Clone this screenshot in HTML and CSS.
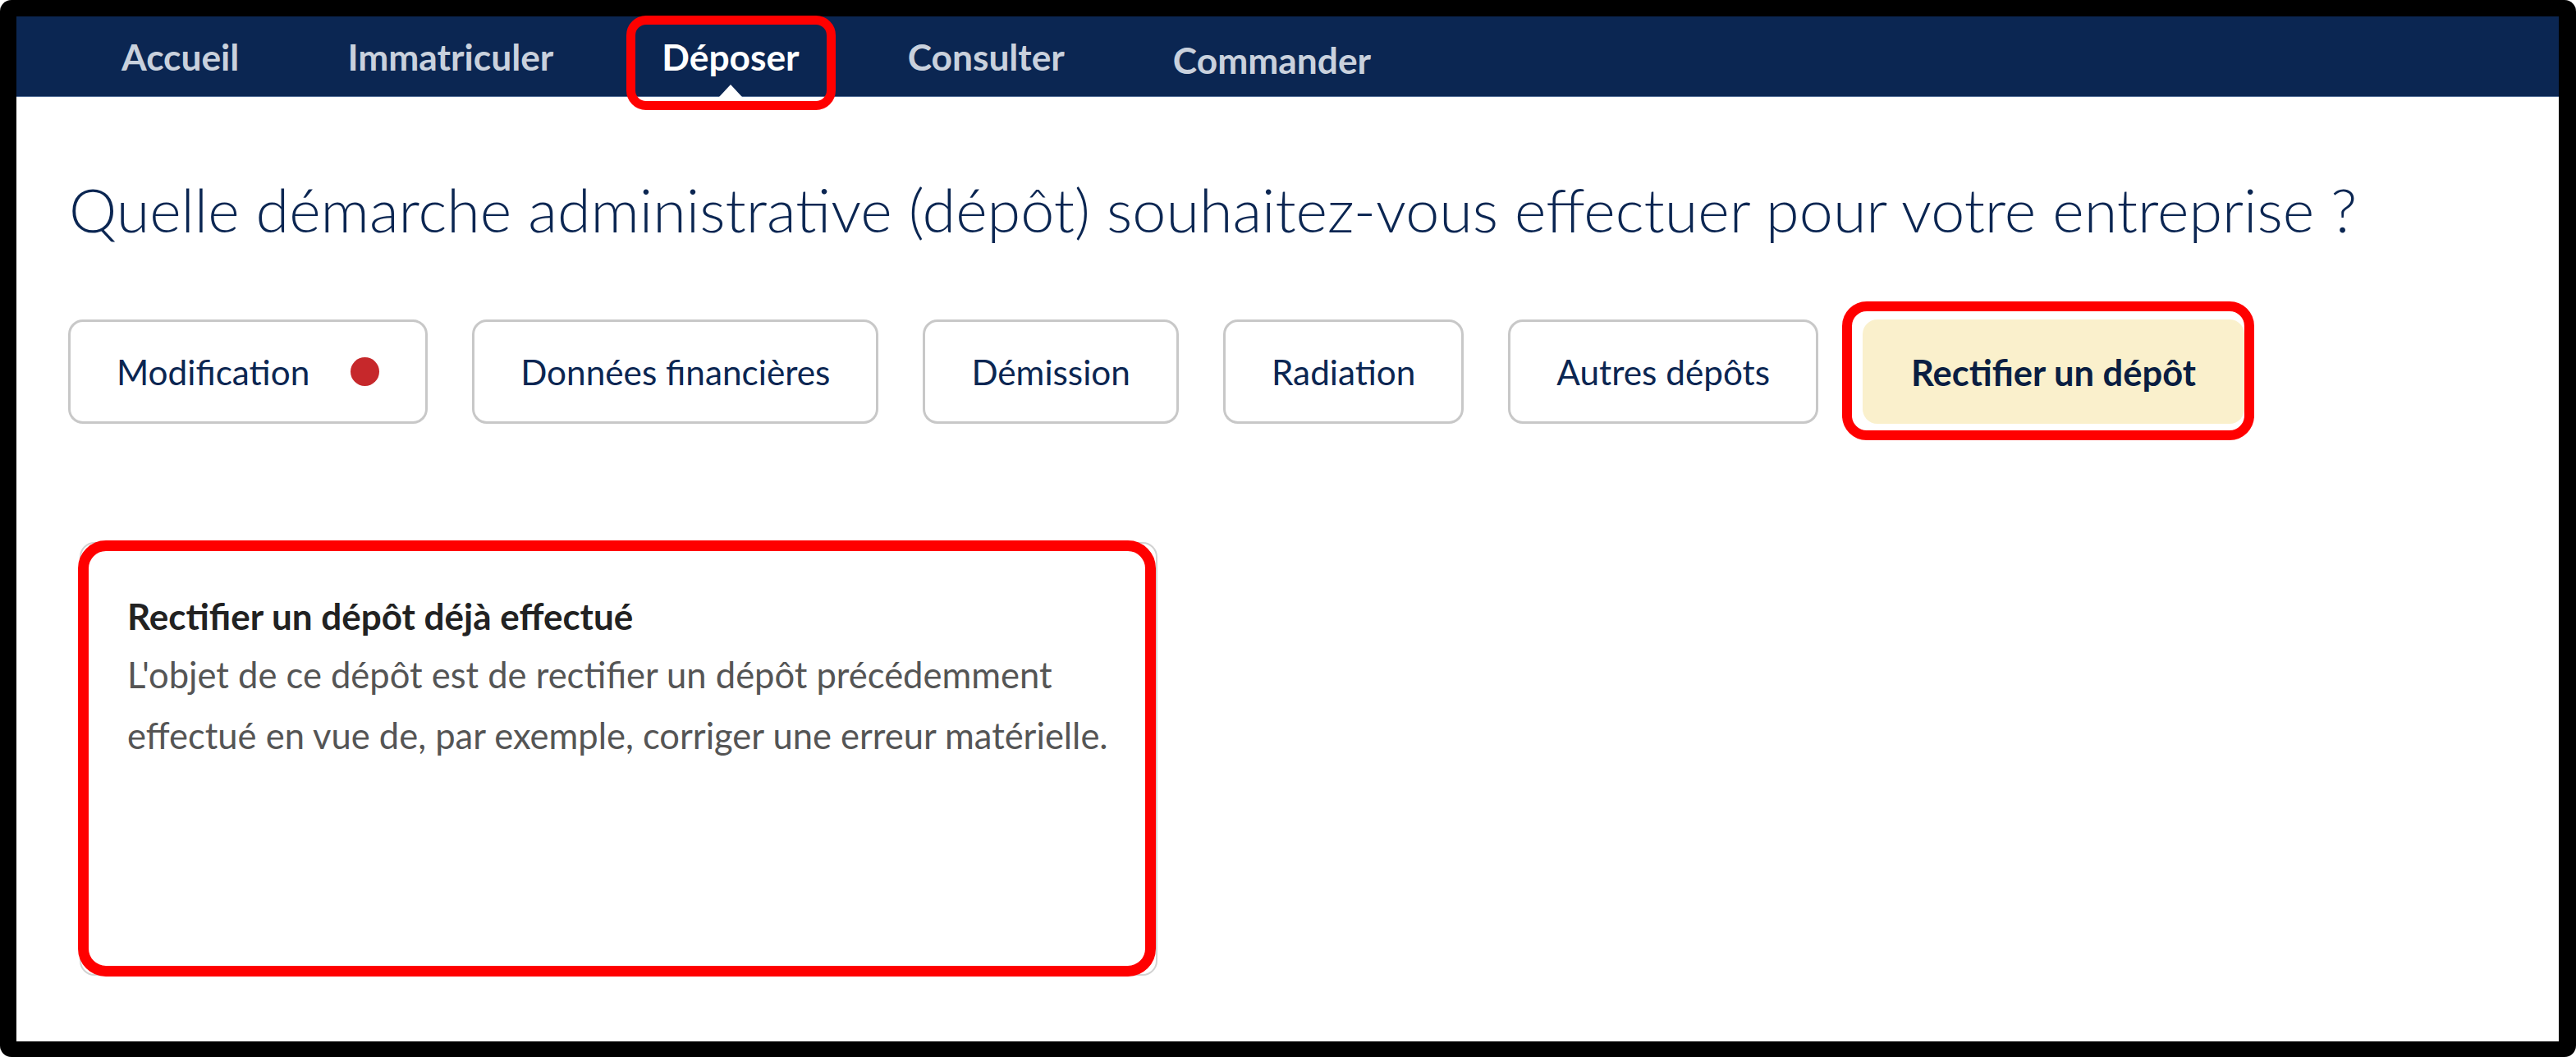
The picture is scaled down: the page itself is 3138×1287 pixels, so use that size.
FILE: index.html
```html
<!DOCTYPE html>
<html lang="fr">
<head>
<meta charset="utf-8">
<title>Déposer</title>
<link rel="stylesheet" href="styles.css">
</head>
<body>
<div class="frame">
  <div class="screen">
    <nav class="topnav">
      <a class="nav-item nav-item--first">Accueil</a>
      <a class="nav-item">Immatriculer</a>
      <a class="nav-item active">Déposer<span class="annot annot-nav"></span></a>
      <a class="nav-item">Consulter</a>
      <a class="nav-item nav-item--low">Commander</a>
    </nav>
    <main class="content">
      <h1 class="title">Quelle démarche administrative (dépôt) souhaitez-vous effectuer pour votre entreprise ?</h1>
      <div class="choices">
        <button class="choice">Modification<span class="dot"></span></button>
        <button class="choice">Données financières</button>
        <button class="choice">Démission</button>
        <button class="choice">Radiation</button>
        <button class="choice">Autres dépôts</button>
        <button class="choice selected">Rectifier un dépôt<span class="annot annot-choice"></span></button>
      </div>
      <section class="card">
        <h2 class="card-title">Rectifier un dépôt déjà effectué</h2>
        <p class="card-text">L'objet de ce dépôt est de rectifier un dépôt précédemment effectué en vue de, par exemple, corriger une erreur matérielle.</p>
        <span class="annot annot-card"></span>
      </section>
    </main>
  </div>
</div>
</body>
</html>
```

FILE: styles.css
```css
html, body {
  margin: 0;
  padding: 0;
  background: #ffffff;
}

.frame {
  width: 3138px;
  height: 1287px;
  box-sizing: border-box;
  background: #000000;
  border-radius: 14px;
  padding: 20px 21px 19px 20px;
}

.screen {
  background: #ffffff;
  height: 100%;
  display: flex;
  flex-direction: column;
  font-family: Lato, "Liberation Sans", sans-serif;
}

.topnav {
  background: #0b2652;
  height: 98px;
  box-sizing: border-box;
  border-bottom: 1px solid #4a6690;
  display: flex;
  align-items: stretch;
  padding-left: 62px;
  flex-shrink: 0;
}

.nav-item {
  position: relative;
  display: flex;
  align-items: center;
  padding: 0 66px;
  color: #c9d1dd;
  font-weight: 700;
  font-size: 44.3px;
  text-decoration: none;
}

.nav-item--low {
  padding-top: 8px;
}

.nav-item.active {
  color: #ffffff;
}

.nav-item.active::after {
  content: "";
  position: absolute;
  left: 50%;
  bottom: -1px;
  transform: translateX(-50%);
  border-left: 14px solid transparent;
  border-right: 14px solid transparent;
  border-bottom: 15px solid #ffffff;
}

.annot {
  position: absolute;
  box-sizing: border-box;
  border: 11px solid #ff0000;
  border-radius: 24px;
  pointer-events: none;
  z-index: 5;
}

.annot-nav {
  left: 23px;
  right: 22px;
  top: -1px;
  bottom: -17px;
}

.content {
  padding: 92px 0 0 64px;
}

.title {
  margin: 0;
  font-size: 73.7px;
  font-weight: 300;
  line-height: 89px;
  color: #0b2652;
}

.choices {
  display: flex;
  gap: 54px;
  margin-top: 90px;
  margin-left: -1px;
}

.choice {
  height: 127px;
  box-sizing: border-box;
  padding: 0 56px;
  border: 3px solid #c8c8c8;
  border-radius: 18px;
  background: #ffffff;
  font-family: inherit;
  font-size: 42.3px;
  font-weight: 400;
  color: #0b2652;
  display: flex;
  align-items: center;
  gap: 50px;
}

.dot {
  width: 35px;
  height: 35px;
  border-radius: 50%;
  background: #c6282b;
}

.choice.selected {
  position: relative;
  background: #faf0cc;
  border-color: #faf0cc;
  font-weight: 700;
  font-size: 43.5px;
  color: #0a1e42;
}

.annot-choice {
  left: -28px;
  top: -25px;
  right: -15px;
  bottom: -23px;
  border-width: 12px;
  border-radius: 30px;
}

.card {
  position: relative;
  margin: 144px 0 0 13px;
  width: 1313px;
  height: 528px;
  box-sizing: border-box;
  border: 2px solid #d2d2d2;
  border-radius: 18px;
  padding: 56px 13px 0 56px;
}

.card-title {
  margin: 0;
  font-size: 44px;
  font-weight: 700;
  line-height: 64px;
  color: #222222;
}

.card-text {
  margin: 2px 0 0 0;
  font-size: 43.5px;
  line-height: 74px;
  color: #555555;
}

.annot-card {
  left: -4px;
  top: -4px;
  right: 0;
  bottom: -3px;
  border-width: 13px;
  border-radius: 34px;
}
```
